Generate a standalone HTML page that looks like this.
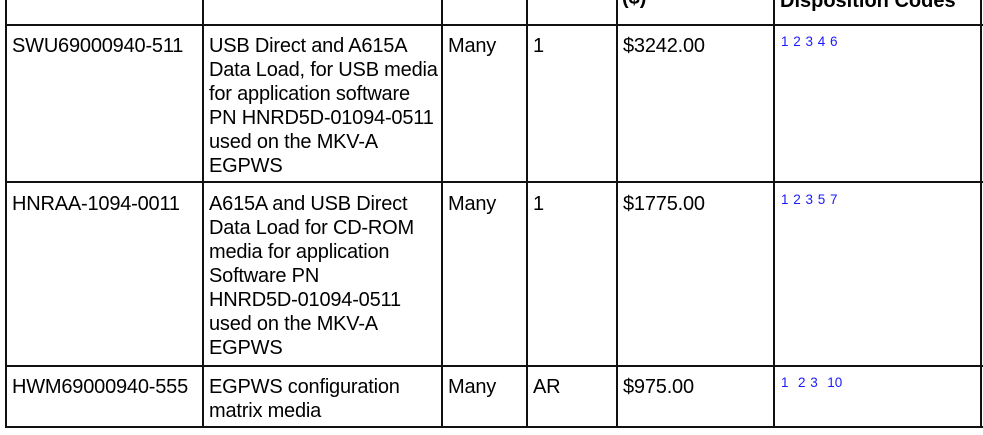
<!DOCTYPE html>
<html><head><style>
body{margin:0;width:983px;height:435px;background:#fff;position:relative;overflow:hidden;font-family:"Liberation Sans",sans-serif;color:#000}
.v{position:absolute;width:2px;background:#111}
.h{position:absolute;height:2px;background:#111;left:5px;width:978px}
.t{position:absolute;font-size:20px;line-height:24px;letter-spacing:-0.2px}
.c{position:absolute;font-size:13.5px;color:#1a1aff;word-spacing:1px}
.hd{position:absolute;font-size:20px;font-weight:bold;line-height:24px}
</style></head><body>
<div class="hd" style="left:622px;top:-14px">($)</div>
<div class="hd" style="left:780px;top:-11px">Disposition Codes</div>
<div class="v" style="left:5px;top:0;height:428px"></div>
<div class="v" style="left:202px;top:0;height:428px"></div>
<div class="v" style="left:441px;top:0;height:428px"></div>
<div class="v" style="left:526px;top:0;height:428px"></div>
<div class="v" style="left:616px;top:0;height:428px"></div>
<div class="v" style="left:773px;top:0;height:428px"></div>
<div class="v" style="left:980px;top:0;height:428px"></div>
<div class="h" style="top:24px"></div>
<div class="h" style="top:181px"></div>
<div class="h" style="top:365px"></div>
<div class="h" style="top:426px"></div>

<div class="t" style="left:12px;top:34px">SWU69000940-511</div>
<div class="t" style="left:209px;top:34px">USB Direct and A615A<br>Data Load, for USB media<br>for application software<br>PN HNRD5D-01094-0511<br>used on the MKV-A<br>EGPWS</div>
<div class="t" style="left:448px;top:34px">Many</div>
<div class="t" style="left:533px;top:34px">1</div>
<div class="t" style="left:623px;top:34px">$3242.00</div>
<div class="c" style="left:781px;top:34px">1 2 3 4 6</div>

<div class="t" style="left:12px;top:192px">HNRAA-1094-0011</div>
<div class="t" style="left:209px;top:192px">A615A and USB Direct<br>Data Load for CD-ROM<br>media for application<br>Software PN<br>HNRD5D-01094-0511<br>used on the MKV-A<br>EGPWS</div>
<div class="t" style="left:448px;top:192px">Many</div>
<div class="t" style="left:533px;top:192px">1</div>
<div class="t" style="left:623px;top:192px">$1775.00</div>
<div class="c" style="left:781px;top:192px">1 2 3 5 7</div>

<div class="t" style="left:12px;top:375px">HWM69000940-555</div>
<div class="t" style="left:209px;top:375px">EGPWS configuration<br>matrix media</div>
<div class="t" style="left:448px;top:375px">Many</div>
<div class="t" style="left:533px;top:375px">AR</div>
<div class="t" style="left:623px;top:375px">$975.00</div>
<div class="c" style="left:781px;top:375px">1 &nbsp;2 3 &nbsp;10</div>
</body></html>
